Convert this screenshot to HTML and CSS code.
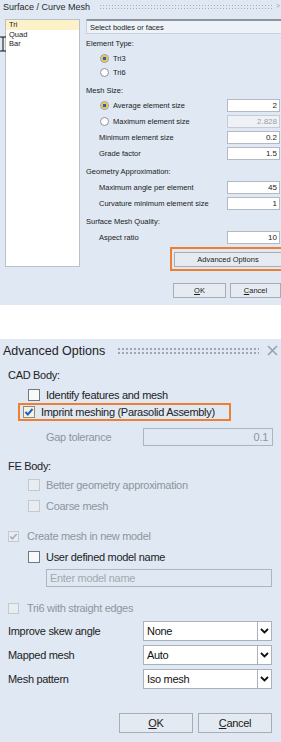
FILE: index.html
```html
<!DOCTYPE html>
<html lang="en">
<head>
    <meta charset="UTF-8">
    <meta name="viewport" content="width=device-width, initial-scale=1.0">
    <title>Surface / Curve Mesh</title>
    <link rel="stylesheet" href="styles.css">
</head>
<body>
    <!-- top dialog: surface / curve mesh -->
    <div class="mesh">
        <div class="mesh-title">
            <span>Surface / Curve Mesh</span>
            <span class="grip small"></span>
            <span class="more">&gt;</span>
        </div>
        <div class="mesh-body">
            <div class="list">
                <div class="item sel">Tri</div>
                <div class="item">Quad</div>
                <div class="item">Bar</div>
                <svg class="ibeam" width="6" height="16" viewBox="0 0 6 16">
                    <path d="M0 1h6M3 1v14M0 15h6" stroke="#111" stroke-width="1" fill="none"/>
                </svg>
            </div>
            <div class="opts">
                <div class="pick">Select bodies or faces</div>
                <div class="grp g1">Element Type:</div>
                <div class="rrow"><span class="radio on"></span>Tri3</div>
                <div class="rrow"><span class="radio"></span>Tri6</div>
                <div class="grp g2">Mesh Size:</div>
                <div class="frow"><span class="radio on"></span><span class="lbl">Average element size</span><span class="num">2</span></div>
                <div class="frow"><span class="radio"></span><span class="lbl">Maximum element size</span><span class="num off">2.828</span></div>
                <div class="frow plain"><span class="lbl">Minimum element size</span><span class="num">0.2</span></div>
                <div class="frow plain"><span class="lbl">Grade factor</span><span class="num">1.5</span></div>
                <div class="grp g3">Geometry Approximation:</div>
                <div class="frow plain"><span class="lbl">Maximum angle per element</span><span class="num">45</span></div>
                <div class="frow plain"><span class="lbl">Curvature minimum element size</span><span class="num">1</span></div>
                <div class="grp g3">Surface Mesh Quality:</div>
                <div class="frow plain"><span class="lbl">Aspect ratio</span><span class="num">10</span></div>
                <div class="adv-wrap">
                    <div class="hilite"><button class="btn adv">Advanced Options</button></div>
                </div>
                <div class="mesh-btns">
                    <button class="btn ok"><u>O</u>K</button>
                    <button class="btn cancel"><u>C</u>ancel</button>
                </div>
            </div>
        </div>
    </div>

    <!-- bottom dialog: advanced options -->
    <div class="adv-dlg">
        <div class="adv-title">
            <span>Advanced Options</span>
            <span class="grip"></span>
            <svg class="close" width="11" height="11" viewBox="0 0 11 11">
                <path d="M1 1l9 9M10 1l-9 9" stroke="#98a3af" stroke-width="1.6"/>
            </svg>
        </div>

        <div class="row head cad">CAD Body:</div>
        <div class="row ind r-ident"><span class="cb"></span>Identify features and mesh</div>
        <div class="row ind r-imprint">
            <div class="orange">
                <span class="cb checked">
                    <svg width="10" height="10" viewBox="0 0 10 10"><path d="M1.5 5l2.3 2.5L8.5 2" stroke="#1a62d6" stroke-width="2" fill="none"/></svg>
                </span>Imprint meshing (Parasolid Assembly)
            </div>
        </div>
        <div class="row ind-text dim r-gap">
            <span class="grow">Gap tolerance</span>
            <span class="field gapf">0.1</span>
        </div>

        <div class="row head fe">FE Body:</div>
        <div class="row ind dim"><span class="cb off"></span>Better geometry approximation</div>
        <div class="row ind dim r-coarse"><span class="cb off"></span>Coarse mesh</div>

        <div class="row dim r-create">
            <span class="cb off small">
                <svg width="9" height="9" viewBox="0 0 9 9"><path d="M1.3 4.5l2 2.2L7.7 2" stroke="#a8adb3" stroke-width="1.6" fill="none"/></svg>
            </span>Create mesh in new model
        </div>
        <div class="row ind r-user"><span class="cb"></span>User defined model name</div>
        <div class="row r-name"><span class="field namef">Enter model name</span></div>

        <div class="row dim r-tri6"><span class="cb off small"></span>Tri6 with straight edges</div>

        <div class="row r-sel s1">
            <span class="grow">Improve skew angle</span>
            <span class="combo"><span class="cval">None</span><span class="carrow"><svg width="9" height="6" viewBox="0 0 9 6"><path d="M1 1l3.5 3.5L8 1" stroke="#111" stroke-width="1.8" fill="none"/></svg></span></span>
        </div>
        <div class="row r-sel">
            <span class="grow">Mapped mesh</span>
            <span class="combo"><span class="cval">Auto</span><span class="carrow"><svg width="9" height="6" viewBox="0 0 9 6"><path d="M1 1l3.5 3.5L8 1" stroke="#111" stroke-width="1.8" fill="none"/></svg></span></span>
        </div>
        <div class="row r-sel">
            <span class="grow">Mesh pattern</span>
            <span class="combo"><span class="cval">Iso mesh</span><span class="carrow"><svg width="9" height="6" viewBox="0 0 9 6"><path d="M1 1l3.5 3.5L8 1" stroke="#111" stroke-width="1.8" fill="none"/></svg></span></span>
        </div>

        <div class="adv-btns">
            <button class="btn big"><u>O</u>K</button>
            <button class="btn big"><u>C</u>ancel</button>
        </div>
    </div>
</body>
</html>
```

FILE: styles.css
```css
body {
    margin: 0;
    width: 281px;
    background: #ffffff;
    font-family: 'Liberation Sans', Arial, sans-serif;
    color: #1b1b1b;
    overflow: hidden;
}

u {
    text-decoration: underline;
    text-underline-offset: 1px;
}

.btn {
    font-family: inherit;
    color: #1b1b1b;
    background: #e6ebf1;
    border: 1px solid #a9adb3;
    padding: 0;
    box-sizing: border-box;
    cursor: pointer;
}

.grip {
    flex: 1;
    height: 7px;
    background-image: radial-gradient(circle, #9ca5b0 0.9px, transparent 1.1px);
    background-size: 4px 4px;
}

.grip.small {
    height: 6px;
    background-size: 3px 3px;
    background-image: radial-gradient(circle, #a3acb7 0.6px, transparent 0.9px);
}

/* ---------- top dialog ---------- */

.mesh {
    height: 305px;
    background: #dfe8f3;
    font-size: 7.5px;
    overflow: hidden;
}

.mesh-title {
    height: 19px;
    display: flex;
    align-items: flex-start;
    padding-left: 3px;
    font-size: 9px;
    color: #2a2a2a;
    box-sizing: border-box;
    padding-top: 2px;
}

.mesh-title .grip {
    margin: 2px 3px 0 9px;
}

.mesh-title .more {
    color: #9aa4b0;
    font-size: 7px;
    margin-right: 1px;
}

.mesh-body {
    display: flex;
    padding-left: 5px;
    gap: 6px;
}

.list {
    position: relative;
    width: 75px;
    height: 248px;
    background: #ffffff;
    border: 1px solid #b9c1cb;
    box-sizing: border-box;
    flex-shrink: 0;
}

.item {
    height: 9.5px;
    line-height: 9.5px;
    padding-left: 3px;
}

.item.sel {
    background: #fdf2c7;
}

.ibeam {
    position: absolute;
    left: -6px;
    top: 16px;
}

.opts {
    flex: 1;
    padding-right: 1px;
}

.pick {
    height: 15px;
    line-height: 13px;
    margin-right: -3px;
    padding-left: 3px;
    background: #edf2f8;
    border: 1px solid #c8d0da;
    border-top: 2px solid #8e949b;
    box-sizing: border-box;
}

.grp {
    height: 14px;
    line-height: 14px;
}

.grp.g1 { margin-top: 3px; }
.grp.g2 { margin-top: 5px; height: 13px; line-height: 13px; }
.grp.g3 { margin-top: 4px; }

.rrow {
    height: 14px;
    display: flex;
    align-items: center;
    padding-left: 14px;
}

.radio {
    width: 9px;
    height: 9px;
    border-radius: 50%;
    border: 1px solid #8e949b;
    background: #ffffff;
    box-sizing: border-box;
    margin-right: 4px;
    flex-shrink: 0;
}

.radio.on {
    background: radial-gradient(circle, #1f63c6 0 1.6px, #f2c240 2px 3px, #ffffff 3.4px);
    border-color: #9a9486;
}

.frow {
    height: 16px;
    display: flex;
    align-items: center;
    padding-left: 14px;
}

.frow.plain {
    padding-left: 13px;
}

.frow .lbl {
    flex: 1;
}

.num {
    width: 53px;
    height: 13px;
    line-height: 11px;
    background: #ffffff;
    border: 1px solid #b3bac3;
    box-sizing: border-box;
    text-align: right;
    padding-right: 2px;
    font-size: 8px;
}

.num.off {
    background: #eef2f6;
    color: #9aa0a7;
    border-color: #c6ccd3;
}

.adv-wrap {
    margin-top: 2px;
    display: flex;
    justify-content: flex-end;
    margin-right: -4px;
}

.hilite {
    width: 114px;
    height: 24px;
    border: 2px solid #ef7f30;
    box-sizing: border-box;
    padding: 3px 0 0 2px;
}

.btn.adv {
    width: 108px;
    height: 15px;
    font-size: 7.5px;
}

.mesh-btns {
    margin-top: 12px;
    display: flex;
    justify-content: flex-end;
    gap: 4px;
    margin-right: -1px;
}

.btn.ok { width: 53px; height: 15px; font-size: 7.5px; }
.btn.cancel { width: 51px; height: 15px; font-size: 7.5px; }

/* ---------- advanced options dialog ---------- */

.adv-dlg {
    margin-top: 34px;
    height: 403px;
    background: #dfe8f3;
    font-size: 11px;
    letter-spacing: -0.3px;
    padding: 0 9px 0 8px;
    color: #222;
}

.adv-title {
    height: 23px;
    display: flex;
    align-items: center;
    margin-left: -5px;
    font-size: 12.5px;
    letter-spacing: 0;
    color: #222;
}

.adv-title .grip {
    margin: 0 8px 0 12px;
}

.close {
    margin-right: -6px;
}

.row {
    display: flex;
    align-items: center;
    height: 20px;
}

.row.ind {
    padding-left: 20px;
}

.row.ind-text {
    padding-left: 38px;
}

.dim {
    color: #8f959c;
}

.cad { margin-top: 3px; }
.r-ident { margin-top: 1px; height: 17px; }
.r-imprint { height: 18px; margin-left: -5px; padding-left: 20px; }
.r-gap { margin-top: 6px; }
.fe { margin-top: 10px; height: 18px; }
.r-coarse { margin-top: 1px; }
.r-create { margin-top: 10px; }
.r-user { margin-top: 1px; }
.r-name { margin-top: 2px; height: 18px; padding-left: 38px; }
.r-tri6 { margin-top: 11px; }
.r-sel { margin-top: 4px; }
.r-sel.s1 { margin-top: 3px; }

.orange {
    display: flex;
    align-items: center;
    width: 213px;
    height: 18px;
    border: 2px solid #ef7f30;
    box-sizing: border-box;
    padding-left: 3px;
    margin-left: -5px;
    color: #222;
}

.cb {
    width: 12px;
    height: 12px;
    border: 1px solid #737880;
    background: #f8f9fb;
    box-sizing: border-box;
    margin-right: 6px;
    flex-shrink: 0;
    display: flex;
    align-items: center;
    justify-content: center;
}

.cb.checked {
    background: #fbf2d2;
    border-color: #8b8a84;
}

.cb.off {
    border-color: #c3c9d0;
    background: #e9edf2;
}

.cb.small {
    width: 11px;
    height: 11px;
    margin-right: 8px;
}

.grow {
    flex: 1;
}

.field {
    height: 18px;
    line-height: 16px;
    border: 1px solid #aeb5be;
    box-sizing: border-box;
}

.gapf {
    width: 130px;
    text-align: right;
    padding-right: 4px;
    color: #8f959c;
    margin-right: -1px;
}

.namef {
    width: 226px;
    padding-left: 3px;
    color: #a2a8ae;
    margin-left: 0;
}

.combo {
    display: flex;
    height: 20px;
    width: 129px;
}

.cval {
    width: 115px;
    background: #ffffff;
    border: 1px solid #abb1b8;
    box-sizing: border-box;
    padding-left: 3px;
    line-height: 18px;
    color: #111;
}

.carrow {
    width: 14px;
    background: #ffffff;
    border: 1px solid #abb1b8;
    border-left: none;
    box-sizing: border-box;
    display: flex;
    align-items: center;
    justify-content: center;
}

.adv-btns {
    margin-top: 24px;
    display: flex;
    justify-content: flex-end;
    gap: 5px;
}

.btn.big {
    width: 74px;
    height: 20px;
    font-size: 11px;
    letter-spacing: -0.3px;
    background: #e4eaf1;
}
```
